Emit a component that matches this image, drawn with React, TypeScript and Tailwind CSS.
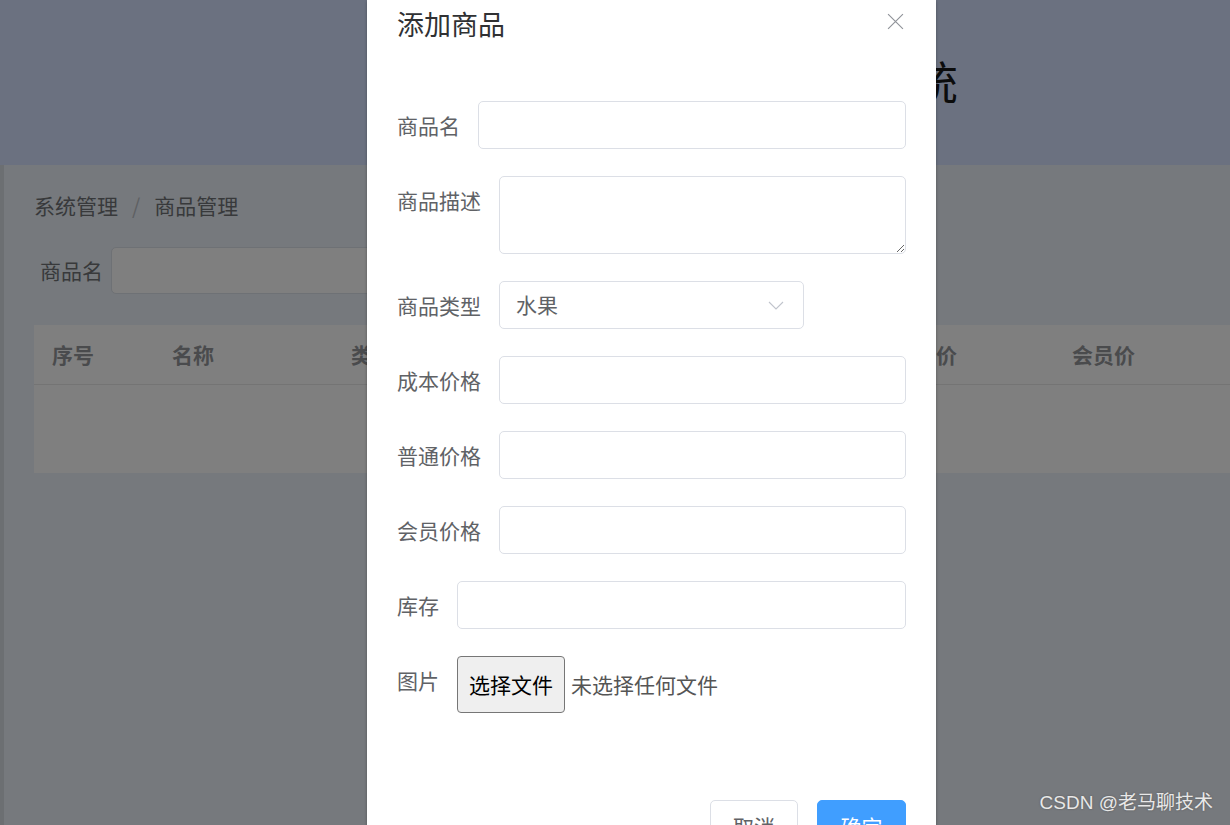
import React from 'react';

const cjk = { fontFamily: '"Noto Sans CJK SC", "Liberation Sans", sans-serif' };

function FormRow({ label, children }: { label: string; children: React.ReactNode }) {
  return (
    <div className="flex items-start mb-[27px]">
      <label className="h-[48px] leading-[48px] pr-[18px] text-[21px] text-[#606266] shrink-0">{label}</label>
      <div className="flex-1 min-w-0">{children}</div>
    </div>
  );
}

function TextInput() {
  return <input className="w-full h-[48px] rounded-[5px] border border-[#dcdfe6] bg-white px-[22px] text-[21px] outline-none" />;
}

export default function App() {
  const columns = [
    { name: '序号', w: 'w-[120px]' },
    { name: '名称', w: 'w-[179px]' },
    { name: '类型', w: 'w-[543px]' },
    { name: '普通价', w: 'w-[178px]' },
    { name: '会员价', w: 'w-[160px]' },
  ];

  return (
    <div className="relative w-[1230px] h-[825px] overflow-hidden bg-[#76797d]" style={cjk}>
      {/* page behind the mask */}
      <header className="h-[165px] bg-[#6b7180] flex items-center justify-end pr-[272px]">
        <h1 className="text-[45px] text-[#0c0c0c] leading-none -mt-[4px]">水果商城管理系统</h1>
      </header>
      <div className="flex h-[660px]">
        <div className="w-[4px] bg-[#6c6f72] shrink-0" />
        <main className="flex-1 pl-[30px] pt-[26px]">
          <div className="flex items-center text-[21px] text-[#38393b] h-[30px]">
            <span>系统管理</span>
            <span className="mx-[14px] text-[#5e6063]">/</span>
            <span>商品管理</span>
          </div>
          <div className="flex items-center mt-[26px] h-[47px]">
            <span className="ml-[6px] mr-[8px] text-[21px] text-[#38393b]">商品名</span>
            <div className="w-[300px] h-[47px] rounded-[5px] border border-[#6e7175] bg-[#7f7f7f]" />
          </div>
          <div className="mt-[31px] bg-[#7f7f7f] h-[148px]">
            <div className="flex h-[60px] items-center border-b border-[#747474] pl-[18px]">
              {columns.map((c) => (
                <div key={c.name} className={`${c.w} shrink-0 text-[21px] font-bold text-[#4a4b4d]`}>{c.name}</div>
              ))}
            </div>
          </div>
        </main>
      </div>

      <div className="absolute right-[17px] bottom-[8px] text-[19px] text-[#e8e8e8] [text-shadow:0_0_2px_#555]" style={{ fontFamily: '"Liberation Sans", "Noto Sans CJK SC", sans-serif' }}>
        CSDN @老马聊技术
      </div>

      {/* dialog */}
      <div className="absolute left-[367px] top-0 w-[569px] h-[900px] bg-white shadow-[0_1px_3px_rgba(0,0,0,0.3)] px-[30px]">
        <div className="h-[46px] flex items-center justify-between">
          <span className="text-[27px] text-[#303133] leading-none">添加商品</span>
          <svg className="w-[17px] h-[17px] mr-[2px] -mt-[3px]" viewBox="0 0 16 16" fill="none" stroke="#909399" strokeWidth="1.1">
            <path d="M1 1L15 15M15 1L1 15" />
          </svg>
        </div>
        <div className="pt-[55px]">
          <FormRow label="商品名"><TextInput /></FormRow>
          <FormRow label="商品描述">
            <textarea className="block w-full h-[78px] rounded-[5px] border border-[#dcdfe6] bg-white px-[22px] py-[8px] text-[21px] outline-none" />
          </FormRow>
          <FormRow label="商品类型">
            <div className="w-[305px] h-[48px] rounded-[5px] border border-[#dcdfe6] flex items-center justify-between pl-[16px] pr-[19px]">
              <span className="text-[21px] text-[#606266]">水果</span>
              <svg className="w-[16px] h-[16px]" viewBox="0 0 16 16" fill="none" stroke="#c0c4cc" strokeWidth="1.1">
                <path d="M1 5l7 7 7-7" />
              </svg>
            </div>
          </FormRow>
          <FormRow label="成本价格"><TextInput /></FormRow>
          <FormRow label="普通价格"><TextInput /></FormRow>
          <FormRow label="会员价格"><TextInput /></FormRow>
          <FormRow label="库存"><TextInput /></FormRow>
          <div className="flex items-start">
            <label className="h-[48px] leading-[48px] pr-[18px] text-[21px] text-[#606266] shrink-0">图片</label>
            <div className="flex items-center">
              <span className="h-[57px] w-[108px] flex items-center justify-center rounded-[4px] border border-[#767676] bg-[#efefef] text-[21px] text-black">选择文件</span>
              <span className="ml-[6px] text-[21px] text-[#555555]">未选择任何文件</span>
            </div>
          </div>
          <div className="flex justify-end gap-[19px] mt-[87px]">
            <button className="w-[88px] h-[54px] rounded-[5px] border border-[#dcdfe6] bg-white text-[21px] text-[#606266]">取消</button>
            <button className="w-[89px] h-[54px] rounded-[5px] border border-[#409eff] bg-[#409eff] text-[21px] text-white">确定</button>
          </div>
        </div>
      </div>
    </div>
  );
}
